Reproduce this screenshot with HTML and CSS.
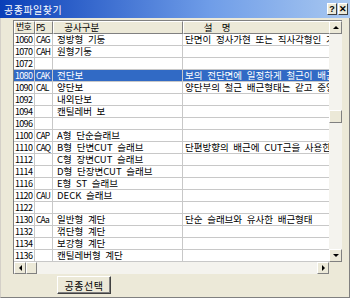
FILE: index.html
```html
<!DOCTYPE html>
<html lang="ko">
<head>
    <meta charset="UTF-8">
    <meta name="viewport" content="width=device-width, initial-scale=1.0">
    <title>공종파일찾기</title>
    <link rel="stylesheet" href="styles.css">
</head>
<body>
    <div class="window">
        <div class="titlebar">
            <span class="title">공종파일찾기</span>
            <div class="title-buttons">
                <span class="tbtn">?</span>
                <span class="tbtn">✕</span>
            </div>
        </div>

        <div class="grid-frame">
            <div class="grid-view">
                <div class="grid-head">
                    <div class="hcell c-no">번호</div>
                    <div class="hcell c-p5">P5</div>
                    <div class="hcell c-name">&nbsp;&nbsp;공사구분</div>
                    <div class="hcell c-desc">&nbsp;&nbsp;&nbsp;&nbsp;설&nbsp;&nbsp;명</div>
                </div>
                <div id="rows"></div>
            </div>

            <div class="vscroll">
                <div class="sbtn"><span class="arr up"></span></div>
                <div class="vtrack"><div class="vthumb"></div></div>
                <div class="sbtn"><span class="arr down"></span></div>
            </div>

            <div class="hscroll">
                <div class="sbtn"><span class="arr left"></span></div>
                <div class="hthumb"></div>
                <div class="htrack"></div>
                <div class="sbtn"><span class="arr right"></span></div>
            </div>
            <div class="corner"></div>
        </div>

        <div class="footer">
            <button class="btn">공종선택</button>
        </div>
    </div>

    <script>
        const items = [
            ['1060', 'CAG', '정방형 기둥', '단면이 정사가현 또는 직사각형인 기둥'],
            ['1070', 'CAH', '원형기둥', ''],
            ['1072', '', '', ''],
            ['1080', 'CAK', '전단보', '보의 전단면에 일정하게 철근이 배근된 보', true],
            ['1090', 'CAL', '양단보', '양단부의 철근 배근형태는 같고 중앙부'],
            ['1092', '', '내외단보', ''],
            ['1094', '', '캔틸레버 보', ''],
            ['1096', '', '', ''],
            ['1100', 'CAP', 'A형 단순슬래브', ''],
            ['1110', 'CAQ', 'B형 단변CUT 슬래브', '단편방향의 배근에 CUT근을 사용한'],
            ['1112', '', 'C형 장변CUT 슬래브', ''],
            ['1114', '', 'D형 단장변CUT 슬래브', ''],
            ['1116', '', 'E형 ST 슬래브', ''],
            ['1120', 'CAU', 'DECK 슬래브', ''],
            ['1122', '', '', ''],
            ['1130', 'CAa', '일반형 계단', '단순 슬래브와 유사한 배근형태'],
            ['1132', '', '꺾단형 계단', ''],
            ['1134', '', '보강형 계단', ''],
            ['1136', '', '캔틸레버형 계단', '']
        ];

        function renderRows() 
        {
            const rows = document.getElementById('rows');
            rows.innerHTML = '';

            items.forEach(item => {
                rows.innerHTML += `
                    <div class="row${item[4] ? ' selected' : ''}">
                        <div class="cell c-no">${item[0]}</div>
                        <div class="cell c-p5">${item[1]}</div>
                        <div class="cell c-name">${item[2]}</div>
                        <div class="cell c-desc">${item[3]}</div>
                    </div>
                `;
            });
        }

        renderRows();
    </script>
</body>
</html>
```

FILE: styles.css
```css
* {
    box-sizing: border-box;
}

body {
    margin: 0;
    font-family: "Noto Sans CJK KR", "Liberation Sans", sans-serif;
    font-size: 9.5px;
    color: #000;
}

.window {
    width: 350px;
    height: 298px;
    background: #ece9d8;
    border: 1px solid #808080;
    border-top: none;
    border-left-color: #d4d0c8;
    display: flex;
    flex-direction: column;
}

.titlebar {
    height: 18px;
    margin: 0 -1px;
    background: linear-gradient(to right, #0a3fb8, #6f9de8 60%, #a9c8f0);
    display: flex;
    align-items: center;
    justify-content: space-between;
    padding: 0 2px 0 4px;
}

.title {
    color: #fff;
    font-size: 10px;
    letter-spacing: 0.5px;
}

.title-buttons {
    display: flex;
    gap: 1px;
}

.tbtn {
    width: 10px;
    height: 12px;
    background: #ece9d8;
    border: 1px solid;
    border-color: #fff #404040 #404040 #fff;
    font-size: 9px;
    font-weight: bold;
    line-height: 10px;
    text-align: center;
    font-family: "Liberation Sans", sans-serif;
}

.grid-frame {
    margin: 2px 0 0 12px;
    width: 329px;
    display: grid;
    grid-template-columns: 315px 13px;
    grid-template-rows: 241px 12px;
    border-left: 1px solid #808080;
    border-top: 1px solid #808080;
}

.grid-view {
    background: #fff;
    overflow: hidden;
}

.grid-head, .row {
    display: flex;
    white-space: nowrap;
    word-spacing: 2px;
}

.grid-head {
    height: 13px;
}

.hcell {
    background: #ece9d8;
    border: 1px solid;
    border-color: #fff #808080 #808080 #fff;
    line-height: 10px;
    padding-left: 1px;
}

.row {
    height: 12px;
    border-bottom: 1px solid #c8c8c8;
}

.cell {
    border-right: 1px solid #c8c8c8;
    line-height: 11px;
    padding-left: 1px;
}

.row .c-name {
    padding-left: 4px;
}

.row .c-desc {
    padding-left: 2px;
    overflow: hidden;
}

.c-no {
    width: 21px;
    flex-shrink: 0;
    font-size: 9px;
    letter-spacing: -0.7px;
    word-spacing: 0;
}

.c-p5 {
    width: 18px;
    flex-shrink: 0;
    font-size: 8.5px;
    letter-spacing: -0.9px;
    padding-left: 0;
}

.row .c-p5 {
    padding-left: 1px;
}

.c-name {
    width: 130px;
    flex-shrink: 0;
}

.c-desc {
    width: 146px;
    border-right: none;
}

.row.selected .cell {
    background: #316ac5;
    color: #fff;
}

.vscroll {
    display: flex;
    flex-direction: column;
    background: #f4f3ee;
}

.vtrack {
    flex: 1;
    padding-top: 76px;
}

.vthumb {
    height: 13px;
    background: #ece9d8;
    border: 1px solid;
    border-color: #fff #808080 #808080 #fff;
}

.sbtn {
    width: 13px;
    height: 13px;
    background: #ece9d8;
    border: 1px solid;
    border-color: #fff #808080 #808080 #fff;
    display: flex;
    align-items: center;
    justify-content: center;
    flex-shrink: 0;
}

.hscroll .sbtn {
    width: 12px;
    height: 12px;
}

.arr {
    width: 0;
    height: 0;
    border: 3px solid transparent;
}

.arr.up {
    border-bottom-color: #000;
    border-top-width: 0;
}

.arr.down {
    border-top-color: #000;
    border-bottom-width: 0;
}

.arr.left {
    border-right-color: #000;
    border-left-width: 0;
}

.arr.right {
    border-left-color: #000;
    border-right-width: 0;
}

.hscroll {
    display: flex;
    background: #f4f3ee;
}

.hthumb {
    width: 11px;
    height: 12px;
    background: #ece9d8;
    border: 1px solid;
    border-color: #fff #808080 #808080 #fff;
}

.htrack {
    flex: 1;
}

.corner {
    background: #ece9d8;
}

.footer {
    padding: 2px 0 0 56px;
}

.btn {
    width: 54px;
    height: 18px;
    padding: 0;
    background: #ece9d8;
    border: 1px solid;
    border-color: #fff #404040 #404040 #fff;
    box-shadow: inset -1px -1px 0 #808080;
    font-family: "Noto Sans CJK KR", sans-serif;
    font-size: 10px;
    letter-spacing: 0.5px;
    color: #000;
}
```
